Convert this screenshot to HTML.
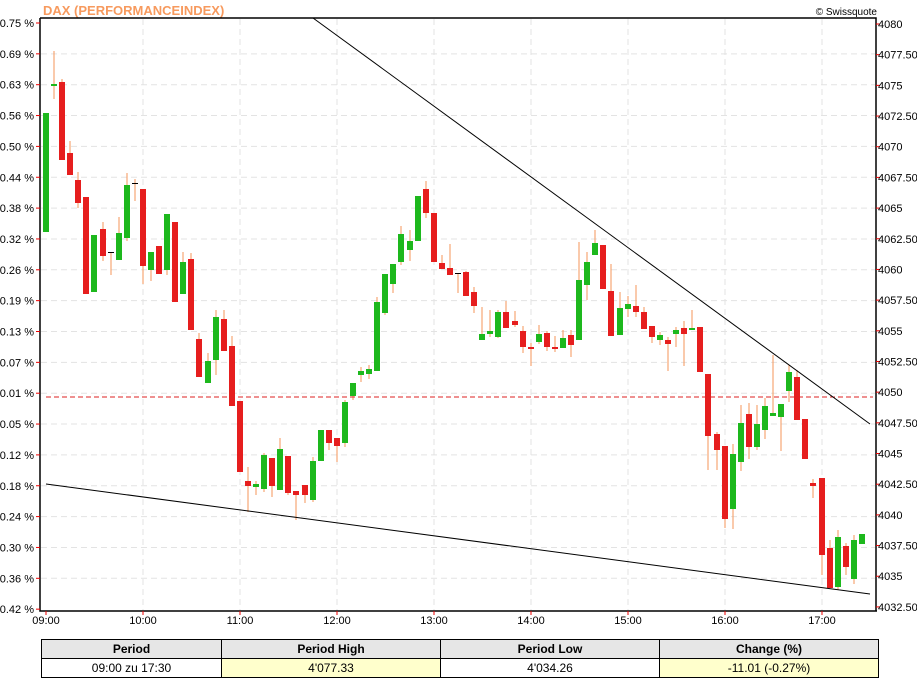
<!DOCTYPE html>
<html><head><meta charset="utf-8"><style>
html,body{margin:0;padding:0;background:#fff;width:917px;height:679px;overflow:hidden;font-family:"Liberation Sans",Arial,sans-serif}
svg text{font-family:"Liberation Sans",Arial,sans-serif;font-size:11px;fill:#000}
table{position:absolute;left:41px;top:639px;border-collapse:collapse;width:838px;font-size:12px}
td{border:1px solid #000;text-align:center;padding:0;height:18px}
tr.h td{background:#e6e6e6;font-weight:bold;height:18px}
td.y{background:#ffffcc}
</style></head><body>
<svg id="c" width="917" height="640" style="position:absolute;left:0;top:0">
<text x="43" y="15" style="font-size:13px;font-weight:bold;fill:#f79a5e">DAX (PERFORMANCEINDEX)</text>
<text x="877" y="15" text-anchor="end" style="font-size:10px">© Swissquote</text>
<g id="grid"></g><g id="cand"></g>
<line x1="46" y1="397" x2="873" y2="397" stroke="#d22" stroke-dasharray="5,3" stroke-width="1"/>
<line x1="313" y1="18" x2="870" y2="424" stroke="#000" stroke-width="1"/>
<line x1="46" y1="484" x2="870" y2="594" stroke="#000" stroke-width="1"/>
<g stroke="#000" stroke-width="1.5" fill="none"><path d="M40 18V611H877M40 18H876V611"/></g>
<g id="ax"></g>
</svg>
<table>
<tr class="h"><td style="width:179px">Period</td><td style="width:218px">Period High</td><td style="width:218px">Period Low</td><td>Change (%)</td></tr>
<tr><td>09:00 zu 17:30</td><td class="y">4'077.33</td><td>4'034.26</td><td class="y">-11.01 (-0.27%)</td></tr>
</table>
<script>
var NS="http://www.w3.org/2000/svg";
function el(p,t,a,txt){var e=document.createElementNS(NS,t);for(var k in a)e.setAttribute(k,a[k]);if(txt!=null)e.textContent=txt;p.appendChild(e);return e;}
var g=document.getElementById('grid'),ax=document.getElementById('ax'),cg=document.getElementById('cand');
var L=["0.75","0.69","0.63","0.56","0.50","0.44","0.38","0.32","0.26","0.19","0.13","0.07","0.01","-0.05","-0.12","-0.18","-0.24","-0.30","-0.36","-0.42"];
var R=["4080","4077.50","4075","4072.50","4070","4067.50","4065","4062.50","4060","4057.50","4055","4052.50","4050","4047.50","4045","4042.50","4040","4037.50","4035","4032.50"];
for(var i=0;i<20;i++){var y=23+i*30.85;var yr=24+i*30.68;
 if(i>0&&i<19)el(g,'line',{x1:41,x2:875,y1:y,y2:y,stroke:'#e3e3e3','stroke-dasharray':'6,4'});
 el(ax,'line',{x1:36,x2:40,y1:y,y2:y,stroke:'#e00'});
 el(ax,'text',{x:34,y:y+4,'text-anchor':'end'},L[i]+" %");
 el(ax,'line',{x1:876,x2:880,y1:yr,y2:yr,stroke:'#e00'});
 el(ax,'text',{x:878,y:yr+4},R[i]);}
var T=["09:00","10:00","11:00","12:00","13:00","14:00","15:00","16:00","17:00"];
for(var i=0;i<9;i++){var x=46+97*i;
 if(i>0)el(g,'line',{x1:x,x2:x,y1:19,y2:610,stroke:'#e3e3e3','stroke-dasharray':'6,4'});
 el(ax,'line',{x1:x,x2:x,y1:611,y2:615,stroke:'#e00'});
 el(ax,'text',{x:x,y:624,'text-anchor':'middle'},T[i]);}
// [x, bodyTop, bodyBot, wickTop, wickBot, c]  c: g=green r=red k=black doji
var D=[[46,113,232,113,232,'g'],[54,84,86,51,99,'g'],[62,82,160,79,160,'r'],[70,153,175,141,175,'r'],[78,180,203,172,208,'r'],[86,197,294,197,294,'r'],[94,235,292,235,292,'g'],[103,229,256,222,261,'r'],[111,252,253,252,275,'k'],[119,233,260,217,260,'g'],[127,185,238,173,241,'g'],[135,183,184,179,201,'k'],[143,189,266,189,284,'r'],[151,252,270,252,281,'g'],[159,246,274,246,274,'r'],[167,214,270,214,275,'g'],[175,222,302,222,302,'r'],[183,262,294,252,294,'g'],[191,259,330,253,330,'r'],[199,339,377,333,377,'r'],[208,361,383,353,383,'g'],[216,317,360,310,375,'g'],[224,319,351,310,351,'r'],[232,346,406,336,406,'r'],[240,401,472,401,472,'r'],[248,481,486,467,512,'r'],
[256,484,487,481,495,'g'],[264,455,489,453,492,'g'],[272,458,486,458,497,'r'],[280,449,490,438,490,'g'],[288,456,493,456,495,'r'],[296,491,495,491,520,'r'],[305,485,495,485,503,'r'],[313,461,500,457,502,'g'],[321,430,461,430,461,'g'],[329,430,443,430,450,'r'],[337,438,446,438,462,'r'],[345,402,443,400,447,'g'],[353,383,396,383,400,'g'],[361,371,375,367,382,'g'],[369,369,374,365,379,'g'],[377,302,371,297,371,'g'],[385,274,313,274,315,'g'],[393,264,284,264,293,'g'],[401,234,262,226,265,'g'],[410,241,250,230,261,'g'],[418,196,241,196,241,'g'],[426,189,213,181,218,'r'],[434,213,262,213,262,'r'],[442,263,269,255,269,'r'],[450,268,275,244,275,'r'],[458,273,274,273,293,'k'],[466,272,296,271,296,'r'],[474,292,306,287,313,'r'],[482,334,340,307,340,'g'],[490,331,334,310,337,'g'],[498,312,337,310,338,'g'],[506,312,328,301,328,'r'],[515,321,325,311,327,'r'],[523,331,347,326,353,'r'],[531,347,349,343,366,'r'],[539,334,342,325,344,'g'],[547,333,347,331,351,'r'],[555,347,349,336,352,'r'],[563,338,348,330,348,'g'],[571,335,345,330,357,'r'],[579,280,340,242,340,'g'],[587,262,285,252,300,'g'],[595,243,255,230,255,'g'],[603,245,289,245,289,'r'],[611,291,336,264,336,'r'],[620,308,335,292,335,'g'],[628,304,309,296,317,'g'],[636,306,312,285,317,'r'],[644,312,329,307,329,'r'],[652,326,337,326,343,'r'],[660,335,340,332,345,'g'],[668,340,344,337,371,'r'],[676,330,334,327,347,'g'],[684,328,334,321,366,'r'],[692,328,330,310,330,'g'],[700,327,372,327,372,'r'],[708,374,436,374,470,'r'],[717,434,450,432,470,'r'],[725,446,519,446,528,'r'],[733,454,509,444,529,'g'],[741,423,462,405,471,'g'],[749,414,447,403,459,'r'],[757,424,447,405,450,'g'],[765,406,430,398,439,'g'],[773,413,416,355,416,'g'],[781,404,417,404,451,'g'],[789,372,391,365,402,'g'],[797,377,420,370,420,'r'],[805,419,459,419,459,'r'],[813,483,486,479,498,'r'],[822,478,555,478,575,'r'],[830,548,588,540,588,'r'],[838,537,587,530,590,'g'],[846,546,567,543,575,'r'],[854,540,579,535,584,'g'],[862,534,544,534,544,'g']];
var C={g:'#1db81d',r:'#e61e1e',k:'#000'};
D.forEach(function(d){
 if(d[3]<d[1]||d[4]>d[2])el(cg,'line',{x1:d[0],x2:d[0],y1:d[3],y2:d[4],stroke:'#f5965a','stroke-width':1});
 var h=Math.max(d[2]-d[1],d[5]=='k'?1:2);
 el(cg,'rect',{x:d[0]-3,y:d[1],width:6,height:h,fill:C[d[5]]});
});
</script>
</body></html>
